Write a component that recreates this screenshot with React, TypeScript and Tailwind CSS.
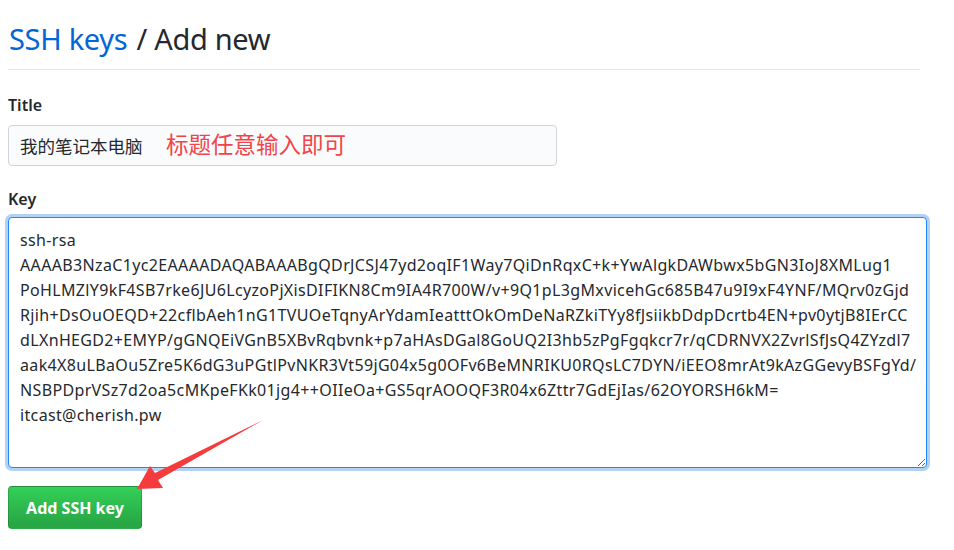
import { useState } from "react";

const keyText = [
  "ssh-rsa",
  "AAAAB3NzaC1yc2EAAAADAQABAAABgQDrJCSJ47yd2oqIF1Way7QiDnRqxC+k+YwAlgkDAWbwx5bGN3IoJ8XMLug1",
  "PoHLMZlY9kF4SB7rke6JU6LcyzoPjXisDIFIKN8Cm9IA4R700W/v+9Q1pL3gMxvicehGc685B47u9I9xF4YNF/MQrv0zGjd",
  "Rjih+DsOuOEQD+22cflbAeh1nG1TVUOeTqnyArYdamIeatttOkOmDeNaRZkiTYy8fJsiikbDdpDcrtb4EN+pv0ytjB8IErCC",
  "dLXnHEGD2+EMYP/gGNQEiVGnB5XBvRqbvnk+p7aHAsDGal8GoUQ2I3hb5zPgFgqkcr7r/qCDRNVX2ZvrlSfJsQ4ZYzdl7",
  "aak4X8uLBaOu5Zre5K6dG3uPGtlPvNKR3Vt59jG04x5g0OFv6BeMNRIKU0RQsLC7DYN/iEEO8mrAt9kAzGGevyBSFgYd/",
  "NSBPDprVSz7d2oa5cMKpeFKk01jg4++OIIeOa+GS5qrAOOQF3R04x6Zttr7GdEjIas/62OYORSH6kM=",
  "itcast@cherish.pw",
].join("\n");

export default function App() {
  const [title, setTitle] = useState("我的笔记本电脑");
  const [key, setKey] = useState(keyText);

  return (
    <div className="relative h-[550px] w-[954px] overflow-hidden bg-white font-['Noto_Sans','Noto_Sans_CJK_SC',sans-serif] text-[#24292e]">
      <div className="w-[920px] pl-2">
        <h2 className="flex h-[70px] items-center border-b border-[#e1e4e8] pl-[1px] pt-[7px] text-[29px] font-normal leading-none tracking-[-0.3px]">
          <a href="#" className="text-[#0366d6]">SSH keys</a>
          <span className="ml-[9px]">/ Add new</span>
        </h2>

        <form className="pt-[25px]" onSubmit={(event) => event.preventDefault()}>
          <label className="block text-[16px] font-semibold leading-[20px]">Title</label>
          <div className="relative mt-[10px] w-[549px]">
            <input
              value={title}
              onChange={(event) => setTitle(event.target.value)}
              className="h-[41px] w-full rounded-[4px] border border-[#d1d5da] bg-[#fafbfc] px-[11px] text-[17.5px] text-[#24292e] outline-none"
            />
            <span className="pointer-events-none absolute left-[158px] top-[5px] text-[22.5px] leading-[30px] text-[#f1444a]">
              标题任意输入即可
            </span>
          </div>

          <label className="mt-[23px] block text-[16px] font-semibold leading-[20px]">Key</label>
          <textarea
            value={key}
            onChange={(event) => setKey(event.target.value)}
            spellCheck={false}
            wrap="off"
            className="mt-[8px] block h-[251px] w-[919px] overflow-hidden rounded-[4px] border border-[#2188ff] bg-white pl-[11px] pr-[4px] pt-[10px] text-[16px] leading-[25px] tracking-[0.35px] text-[#24292e] shadow-[0_0_0_3px_rgba(3,102,214,0.3)] outline-none"
          />

          <button
            type="submit"
            className="mt-[18px] flex h-[43px] w-[134px] items-center justify-center rounded-[4px] border border-[rgba(27,31,35,0.2)] bg-[linear-gradient(180deg,#34d058,#28a745_90%)] text-[16px] font-bold text-white"
          >
            Add SSH key
          </button>
        </form>
      </div>

      <svg className="pointer-events-none absolute left-0 top-0" width="954" height="550">
        <polygon points="263,420 158,480 163,488 137,489 150,466 155,473" fill="#f53b3b" />
      </svg>
    </div>
  );
}
